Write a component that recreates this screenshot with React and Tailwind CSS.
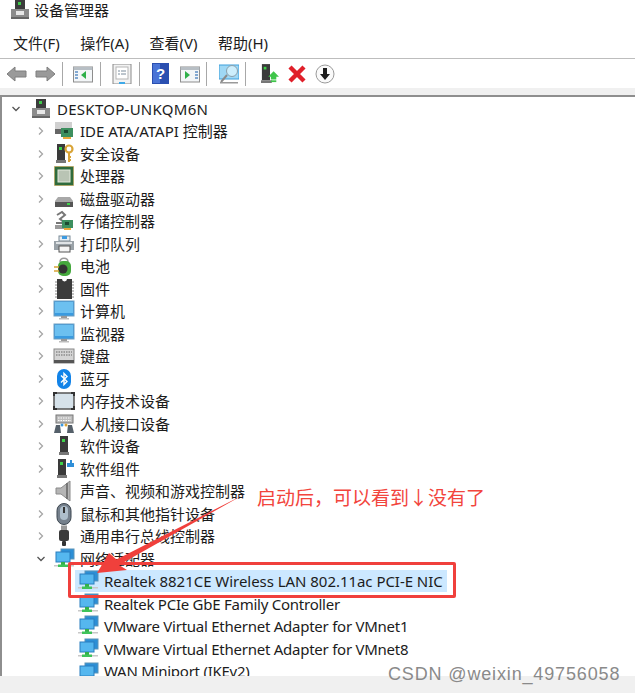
const Svg = ({ w = 22, h = 22, children }) => (
  <svg width={w} height={h} viewBox="0 0 22 22" className="shrink-0">{children}</svg>
);

const Tower = ({ x = 7 }) => (
  <g>
    <rect x={x} y="1" width="8" height="16" fill="#3a3a3a" />
    <rect x={x + 2} y="4" width="3" height="3" fill="#3fd24a" />
    <rect x={x - 1} y="17" width="10" height="3" fill="#777" />
  </g>
);

const Computer = () => (
  <Svg>
    <rect x="6" y="1" width="10" height="9" fill="#3c3c3c" />
    <rect x="9" y="3" width="3" height="3" fill="#3fc94a" />
    <rect x="2" y="10" width="18" height="9" fill="#8c8c8c" />
    <rect x="7" y="12" width="8" height="4" fill="#e8e8e8" />
    <rect x="2" y="18" width="18" height="2" fill="#666" />
  </Svg>
);

const Ide = () => (
  <Svg>
    <rect x="2" y="2" width="17" height="7" fill="#d0d0d0" />
    <rect x="2" y="9" width="8" height="5" fill="#666" />
    <rect x="8" y="8" width="12" height="9" fill="#3d8f5f" />
    <rect x="11" y="10" width="4" height="3" fill="#1c4a30" />
    <rect x="10" y="17" width="8" height="2" fill="#e8a93a" />
  </Svg>
);

const Key = () => (
  <Svg>
    <Tower x={4} />
    <circle cx="16" cy="6" r="3.5" fill="none" stroke="#d9a437" strokeWidth="2.2" />
    <path d="M16 9v10M16 14h2M16 17h2" stroke="#d9a437" strokeWidth="2" />
  </Svg>
);

const Cpu = () => (
  <Svg>
    <rect x="1.5" y="1.5" width="19" height="19" fill="#2f6b3c" stroke="#c79a3d" strokeDasharray="1 1" />
    <rect x="5" y="5" width="12" height="12" fill="#b9c4b4" stroke="#e3e8dc" />
  </Svg>
);

const Disk = () => (
  <Svg>
    <path d="M5 9h12l3 4v5H2v-5z" fill="#a8a8a8" />
    <rect x="2" y="14" width="18" height="5" fill="#555" />
    <rect x="14" y="15" width="3" height="2" fill="#3fd24a" />
  </Svg>
);

const Storage = () => (
  <Svg>
    <path d="M4 5l5-3 3 3-5 4 5 4H3" fill="none" stroke="#777" strokeWidth="2" />
    <rect x="2" y="15" width="11" height="4" fill="#9a9a9a" />
    <rect x="9" y="10" width="11" height="8" fill="#3d8f5f" />
    <rect x="12" y="12" width="4" height="3" fill="#1c4a30" />
    <rect x="11" y="18" width="7" height="2" fill="#e8a93a" />
  </Svg>
);

const Printer = () => (
  <Svg>
    <rect x="6" y="3" width="11" height="5" fill="#e7edf2" stroke="#7a8a96" />
    <rect x="9" y="3" width="5" height="3" fill="#3c9ae0" />
    <rect x="1" y="8" width="20" height="9" fill="#9aa2a8" />
    <rect x="3" y="9" width="16" height="2" fill="#dfe3e6" />
    <rect x="6" y="13" width="11" height="6" fill="#f5f5f5" stroke="#555" />
  </Svg>
);

const Battery = () => (
  <Svg>
    <path d="M7 7c0-5 8-5 8 0" fill="none" stroke="#999" strokeWidth="1.5" />
    <rect x="5" y="6" width="13" height="15" rx="5" fill="#45a83d" />
    <circle cx="10" cy="14" r="4.5" fill="#333" />
    <path d="M1 12h5M1 16h5" stroke="#d9a437" strokeWidth="1.6" />
  </Svg>
);

const Chip = () => (
  <Svg>
    <rect x="4" y="1" width="15" height="20" fill="#3b3b3b" />
    <path d="M9 1a2.5 2.5 0 0 0 5 0z" fill="#fff" />
    <path d="M2 4h2M2 7h2M2 10h2M2 13h2M2 16h2M2 19h2M19 4h2M19 7h2M19 10h2M19 13h2M19 16h2M19 19h2" stroke="#888" />
  </Svg>
);

const Monitor = () => (
  <Svg>
    <rect x="1" y="1" width="20" height="15" fill="#3a9be0" stroke="#6c9dc0" />
    <rect x="2" y="2" width="18" height="11" fill="#6cc0f0" />
    <rect x="8" y="16" width="6" height="2" fill="#999" />
    <rect x="6" y="18" width="10" height="1.5" fill="#bdbdbd" />
  </Svg>
);

const Keyboard = () => (
  <Svg>
    <rect x="1" y="4" width="20" height="14" fill="#d4d4d4" stroke="#888" />
    <path d="M3 7h16M3 10h16" stroke="#8a8a8a" strokeWidth="1.4" strokeDasharray="1.5 1" />
    <rect x="1" y="15" width="20" height="3" fill="#555" />
  </Svg>
);

const Bluetooth = () => (
  <Svg>
    <rect x="4" y="1" width="14" height="20" rx="7" fill="#1283e8" />
    <path d="M8 7.5l6 6-3 3v-11l3 3-6 6" fill="none" stroke="#fff" strokeWidth="1.4" />
  </Svg>
);

const Memory = () => (
  <Svg>
    <rect x="1" y="3" width="20" height="16" rx="2" fill="#d6e2ea" stroke="#555" strokeWidth="1.5" />
    <path d="M1 6V3h3M21 6V3h-3M1 16v3h3M21 16v3h-3" fill="none" stroke="#333" strokeWidth="2" />
  </Svg>
);

const Hid = () => (
  <Svg>
    <rect x="3" y="2" width="17" height="8" fill="#bdbdbd" stroke="#777" />
    <path d="M5 5h13M5 7.5h13" stroke="#fff" strokeDasharray="1.5 1" />
    <path d="M1 20l2-8h4l1 8zM14 20l1-8h4l2 8z" fill="#55606a" />
    <circle cx="9" cy="12" r="1.5" fill="#3c9ae0" />
    <circle cx="13" cy="12" r="1.5" fill="#d9a437" />
  </Svg>
);

const SoftDevice = () => (
  <Svg><Tower x={7} /></Svg>
);

const SoftComponent = () => (
  <Svg>
    <Tower x={5} />
    <path d="M14 5h3V2h2v3h2v4h-7z" fill="#2f8fd8" />
  </Svg>
);

const Speaker = () => (
  <Svg>
    <path d="M3 8h5l9-7v20l-9-7H3z" fill="#b5b5b5" stroke="#8a8a8a" />
    <path d="M14 3v16" stroke="#777" strokeWidth="2" />
  </Svg>
);

const Mouse = () => (
  <Svg>
    <rect x="4" y="0.5" width="14" height="21" rx="7" fill="#75808c" stroke="#3d4750" />
    <rect x="7" y="3" width="8" height="14" rx="4" fill="#aebecb" />
    <rect x="10" y="4" width="2" height="6" fill="#333" />
  </Svg>
);

const Usb = () => (
  <Svg>
    <rect x="8" y="0.5" width="6" height="5" fill="#999" />
    <rect x="6" y="5" width="10" height="11" rx="2" fill="#3a3a3a" />
    <rect x="9" y="16" width="4" height="5" rx="1" fill="#333" />
  </Svg>
);

const Network = () => (
  <Svg>
    <rect x="8" y="1" width="13" height="10" fill="#2c8fd6" stroke="#5a93b8" />
    <rect x="3" y="4" width="14" height="10" fill="#55b7ef" stroke="#2a7fbf" />
    <rect x="8" y="14" width="4" height="3" fill="#35b04a" />
    <rect x="1" y="17" width="20" height="1.5" fill="#c8c8c8" />
    <rect x="5" y="16.5" width="10" height="2.5" fill="#3fc35a" />
  </Svg>
);

const ToolIcon = ({ children, className = "" }) => (
  <svg width="20" height="20" viewBox="2 2 20 20" className={"shrink-0 " + className}>{children}</svg>
);

const Sep = ({ className = "" }) => <div className={"w-px h-[24px] bg-[#a8a8a8] shrink-0 " + className} />;

const WindowPane = ({ side, className = "" }) => (
  <ToolIcon className={className}>
    <rect x="2.5" y="5" width="19" height="15" fill="#f3f6f8" stroke="#8d8d8d" />
    <rect x="2.5" y="5" width="19" height="3" fill="#b7bec4" />
    {side === "l" ? (
      <g>
        <path d="M4 10h3M4 13h3M4 16h3" stroke="#5e8fc4" strokeWidth="1.6" />
        <path d="M15 9v8l-5-4z" fill="#2fb04a" />
      </g>
    ) : (
      <g>
        <path d="M17 10h3M17 13h3M17 16h3" stroke="#5e8fc4" strokeWidth="1.6" />
        <path d="M7 9v8l5-4z" fill="#2fb04a" />
      </g>
    )}
  </ToolIcon>
);

const Toolbar = () => (
  <div className="flex items-center h-[30px] pl-[6px] border-t border-[#bdbdbd]">
    <svg width="21" height="16" viewBox="0 0 21 16" className="shrink-0">
      <path d="M9 1L1 8l8 7v-4h11V5H9z" fill="#9a9a9a" stroke="#7f7f7f" />
    </svg>
    <svg width="21" height="16" viewBox="0 0 21 16" className="shrink-0 ml-[8px]">
      <path d="M12 1l8 7-8 7v-4H1V5h11z" fill="#9a9a9a" stroke="#7f7f7f" />
    </svg>
    <Sep className="ml-[6px]" />
    <WindowPane side="l" className="ml-[10px]" />
    <Sep className="ml-[7px]" />
    <ToolIcon className="ml-[11px]">
      <rect x="3" y="2" width="18" height="20" fill="#f2f2f2" stroke="#8a8a8a" />
      <rect x="6" y="5" width="12" height="12" fill="#fff" stroke="#b5b5b5" />
      <path d="M8 9h2M11 9h5M8 12h2M11 12h5" stroke="#7b8c9c" />
      <rect x="9" y="20" width="6" height="2" fill="#3fa9e8" />
    </ToolIcon>
    <Sep className="ml-[7px]" />
    <svg width="17" height="21" viewBox="0 0 17 21" className="shrink-0 ml-[12px]">
      <rect width="17" height="21" fill="#2a4fb0" />
      <rect x="1" y="1" width="7" height="19" fill="#4a74d6" />
      <text x="8.5" y="16" textAnchor="middle" fontSize="15" fontWeight="700" fontFamily="Liberation Sans, sans-serif" fill="#fff">?</text>
    </svg>
    <WindowPane side="r" className="ml-[11px]" />
    <Sep className="ml-[6px]" />
    <ToolIcon className="ml-[12px]">
      <rect x="2" y="3" width="20" height="14" fill="#9fd8f5" stroke="#3fa0dc" />
      <circle cx="15" cy="9" r="5.5" fill="#cdeefc" stroke="#8aa0ad" />
      <path d="M10 13l-6 7" stroke="#8a8a8a" strokeWidth="2" />
      <rect x="3" y="20" width="18" height="1.5" fill="#9a9a9a" />
    </ToolIcon>
    <Sep className="ml-[6px]" />
    <svg width="18" height="22" viewBox="3 1 20 22" className="shrink-0 ml-[15px]">
      <rect x="4" y="1" width="9" height="18" fill="#3a3a3a" />
      <rect x="6" y="4" width="3" height="3" fill="#3fd24a" />
      <rect x="3" y="19" width="12" height="3" fill="#777" />
      <path d="M17 9l6 6h-3v3h-6v-3h-3z" fill="#3fc54a" />
      <rect x="14" y="19" width="6" height="2" fill="#3fc54a" />
    </svg>
    <svg width="18" height="18" viewBox="0 0 18 18" className="shrink-0 ml-[9px]">
      <path d="M2 2l14 14M16 2L2 16" stroke="#e0202a" strokeWidth="4.4" />
    </svg>
    <svg width="20" height="20" viewBox="0 0 20 20" className="shrink-0 ml-[9px]">
      <circle cx="10" cy="10" r="9" fill="#fafafa" stroke="#9a9a9a" />
      <path d="M8 4h4v6h3l-5 6-5-6h3z" fill="#1c1c1c" />
    </svg>
  </div>
);

const categories = [
  ["IDE ATA/ATAPI 控制器", Ide],
  ["安全设备", Key],
  ["处理器", Cpu],
  ["磁盘驱动器", Disk],
  ["存储控制器", Storage],
  ["打印队列", Printer],
  ["电池", Battery],
  ["固件", Chip],
  ["计算机", Monitor],
  ["监视器", Monitor],
  ["键盘", Keyboard],
  ["蓝牙", Bluetooth],
  ["内存技术设备", Memory],
  ["人机接口设备", Hid],
  ["软件设备", SoftDevice],
  ["软件组件", SoftComponent],
  ["声音、视频和游戏控制器", Speaker],
  ["鼠标和其他指针设备", Mouse],
  ["通用串行总线控制器", Usb],
];

const adapters = [
  "Realtek PCIe GbE Family Controller",
  "VMware Virtual Ethernet Adapter for VMnet1",
  "VMware Virtual Ethernet Adapter for VMnet8",
];

const Chevron = ({ open }) => (
  <svg width="10" height="10" viewBox="0 0 10 10" className="shrink-0">
    <path d={open ? "M1.5 3L5 6.5 8.5 3" : "M3 1.5L6.5 5 3 8.5"} fill="none" stroke={open ? "#555" : "#a6a6a6"} strokeWidth="1.3" />
  </svg>
);

const Row = ({ indent, chevron, Icon, label, labelClass = "", iconGap = "ml-[7px]" }) => (
  <div className={"flex items-center h-[22.5px] shrink-0 " + indent}>
    {chevron}
    <div className={"flex items-center gap-[5px] " + iconGap}>
      <Icon />
      <span className={"whitespace-nowrap " + labelClass}>{label}</span>
    </div>
  </div>
);

export default function App() {
  return (
    <div
      className="relative w-[635px] h-[693px] overflow-hidden bg-white text-[15px] text-[#1c1c1c]"
      style={{ fontFamily: '"Noto Sans", "Noto Sans CJK SC", sans-serif' }}
    >
      <div className="flex items-center gap-[3px] h-[20px] pl-[9px]">
        <Computer />
        <span className="text-[15px]">设备管理器</span>
      </div>
      <div className="flex items-center gap-[20.5px] h-[38px] pl-[13px] pt-[9px]">
        <span>文件(F)</span>
        <span>操作(A)</span>
        <span>查看(V)</span>
        <span>帮助(H)</span>
      </div>
      <Toolbar />
      <div className="h-[7px] bg-[#f0f0f0]" />
      <div className="h-[598px] bg-[#f0f0f0]">
        <div className="flex flex-col h-[581px] pt-[0.5px] border-l-[2px] border-t-[2px] border-[#8e8e8e] bg-white overflow-hidden">
          <Row
            indent="pl-[9px]"
            iconGap="ml-[9px]"
            chevron={<Chevron open />}
            Icon={Computer}
            label="DESKTOP-UNKQM6N"
            labelClass="tracking-[0.27px]"
          />
          {categories.map(([label, Icon]) => (
            <Row key={label} indent="pl-[34px]" chevron={<Chevron />} Icon={Icon} label={label} />
          ))}
          <Row indent="pl-[34px]" chevron={<Chevron open />} Icon={Network} label="网络适配器" />
          <div className="flex items-center h-[22.5px] shrink-0 pl-[73px]">
            <div className="flex items-center gap-[5px] h-[22px] w-[372px] bg-[#cce8ff] pl-[2px]">
              <Network />
              <span className="whitespace-nowrap tracking-[-0.04px]">Realtek 8821CE Wireless LAN 802.11ac PCI-E NIC</span>
            </div>
          </div>
          {adapters.map((a) => (
            <div key={a} className="flex items-center gap-[5px] h-[22.5px] shrink-0 pl-[75px]">
              <Network />
              <span className="whitespace-nowrap tracking-[-0.25px]">{a}</span>
            </div>
          ))}
          <div className="flex items-start gap-[5px] h-[18px] shrink-0 pl-[75px] pt-[2px]">
            <Network />
            <span className="whitespace-nowrap leading-[18px] tracking-[-0.25px]">WAN Miniport (IKEv2)</span>
          </div>
        </div>
      </div>

      <div className="absolute left-[68px] top-[562px] w-[388px] h-[36px] border-[3px] border-[#f0403c] rounded-[2px]" />
      <svg className="absolute left-0 top-0 pointer-events-none" width="635" height="693" viewBox="0 0 635 693">
        <path d="M243 495L119 565l8 5-30 3 12-20 7.500 6.500z" fill="#f0403c" />
      </svg>
      <div className="absolute left-[257px] top-[484px] text-[19px] leading-[28px] text-[#f2453d] whitespace-nowrap">
        启动后，可以看到↓没有了
      </div>
      <div className="absolute left-[388px] top-[662px] text-[18px] leading-[24px] tracking-[0.85px] text-[#8a8a8a] whitespace-nowrap" style={{ fontFamily: '"Liberation Sans", sans-serif' }}>
        CSDN @weixin_49756058
      </div>
    </div>
  );
}
